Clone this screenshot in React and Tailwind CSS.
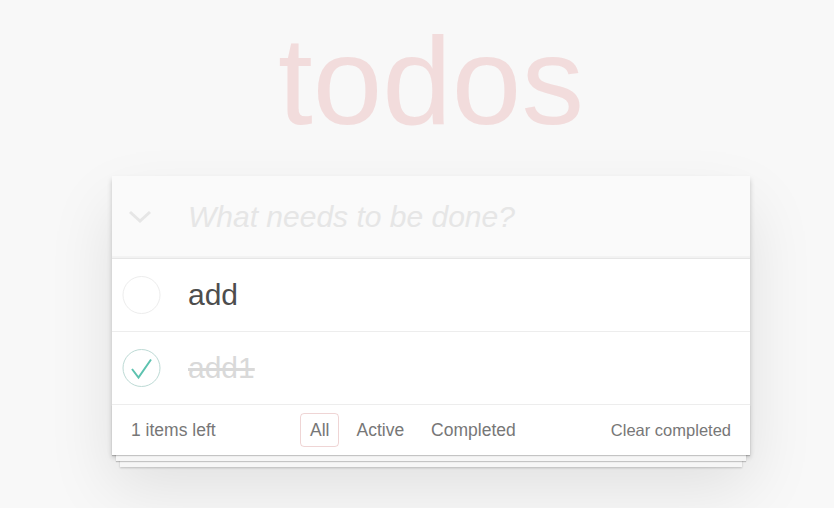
import { useState } from 'react'

const todosInit = [
  { id: 1, title: 'add', done: false },
  { id: 2, title: 'add1', done: true },
]

function Toggle({ checked, onClick }) {
  return (
    <button onClick={onClick} className="w-[50px] h-full flex items-center justify-center shrink-0">
      <svg width="40" height="40" viewBox="0 0 40 40">
        <circle cx="19.5" cy="20" r="18.5" fill="none" stroke={checked ? '#bddad5' : '#ededed'} strokeWidth="1" />
        {checked && <path d="M10 21 L16.5 29.5 L29 11.5" fill="none" stroke="#5dc2af" strokeWidth="2" />}
      </svg>
    </button>
  )
}

export default function App() {
  const [todos, setTodos] = useState(todosInit)
  const [filter, setFilter] = useState('All')
  const left = todos.filter(t => !t.done).length

  const toggle = id => setTodos(todos.map(t => (t.id === id ? { ...t, done: !t.done } : t)))

  return (
    <div className="min-h-screen bg-[#f8f8f8] pt-[18px] font-['Liberation_Sans',Arial,sans-serif] text-[#4d4d4d]">
      <div className="ml-[112px] w-[638px]">
        <h1 className="text-center text-[125px] leading-none font-thin text-[#f2dcdc]">todos</h1>

        <div className="mt-[33px] bg-white shadow-[0_2.5px_5px_0_rgba(0,0,0,0.2),0_31px_62px_0_rgba(0,0,0,0.1)]">
          <header className="flex items-center h-[82px] bg-[#fafafa] shadow-[inset_0_-2px_1px_rgba(0,0,0,0.03)]">
            <div className="w-[76px] h-full flex items-center pl-[16px] shrink-0">
              <svg width="24" height="14" viewBox="0 0 24 14">
                <path d="M2 2 L12 11 L22 2" fill="none" stroke="#e6e6e6" strokeWidth="3" />
              </svg>
            </div>
            <input
              className="flex-1 h-full bg-transparent outline-none text-[30px] pr-5 placeholder:italic placeholder:text-[#e6e6e6] placeholder:font-light"
              placeholder="What needs to be done?"
            />
          </header>

          <ul className="border-t border-[#e6e6e6]">
            {todos.map(t => (
              <li key={t.id} className="flex items-center h-[73px] border-b border-[#ededed]">
                <div className="pl-[5px] h-full flex items-center">
                  <Toggle checked={t.done} onClick={() => toggle(t.id)} />
                </div>
                <label
                  className={`pl-[21px] text-[30px] leading-[36px] ${t.done ? 'line-through text-[#d9d9d9]' : 'text-[#4d4d4d]'}`}
                >
                  {t.title}
                </label>
              </li>
            ))}
          </ul>

          <footer className="flex items-center h-[50px] px-[19px] text-[17.5px] text-[#777] shadow-[0_1px_1px_rgba(0,0,0,0.2),0_10px_0_-4px_#f6f6f6,0_11px_1px_-4px_rgba(0,0,0,0.2),0_20px_0_-8px_#f6f6f6,0_21px_2px_-8px_rgba(0,0,0,0.2)]">
            <span className="w-[169px]">{left} items left</span>
            <ul className="flex gap-[7px]">
              {['All', 'Active', 'Completed'].map(f => (
                <li key={f}>
                  <button
                    onClick={() => setFilter(f)}
                    className={`px-[9px] h-[34px] leading-[32px] rounded-[4px] border ${filter === f ? 'border-[rgba(175,47,47,0.2)]' : 'border-transparent'}`}
                  >
                    {f}
                  </button>
                </li>
              ))}
            </ul>
            <button className="ml-auto text-[16.5px] text-[#777]">Clear completed</button>
          </footer>
        </div>
      </div>
    </div>
  )
}
